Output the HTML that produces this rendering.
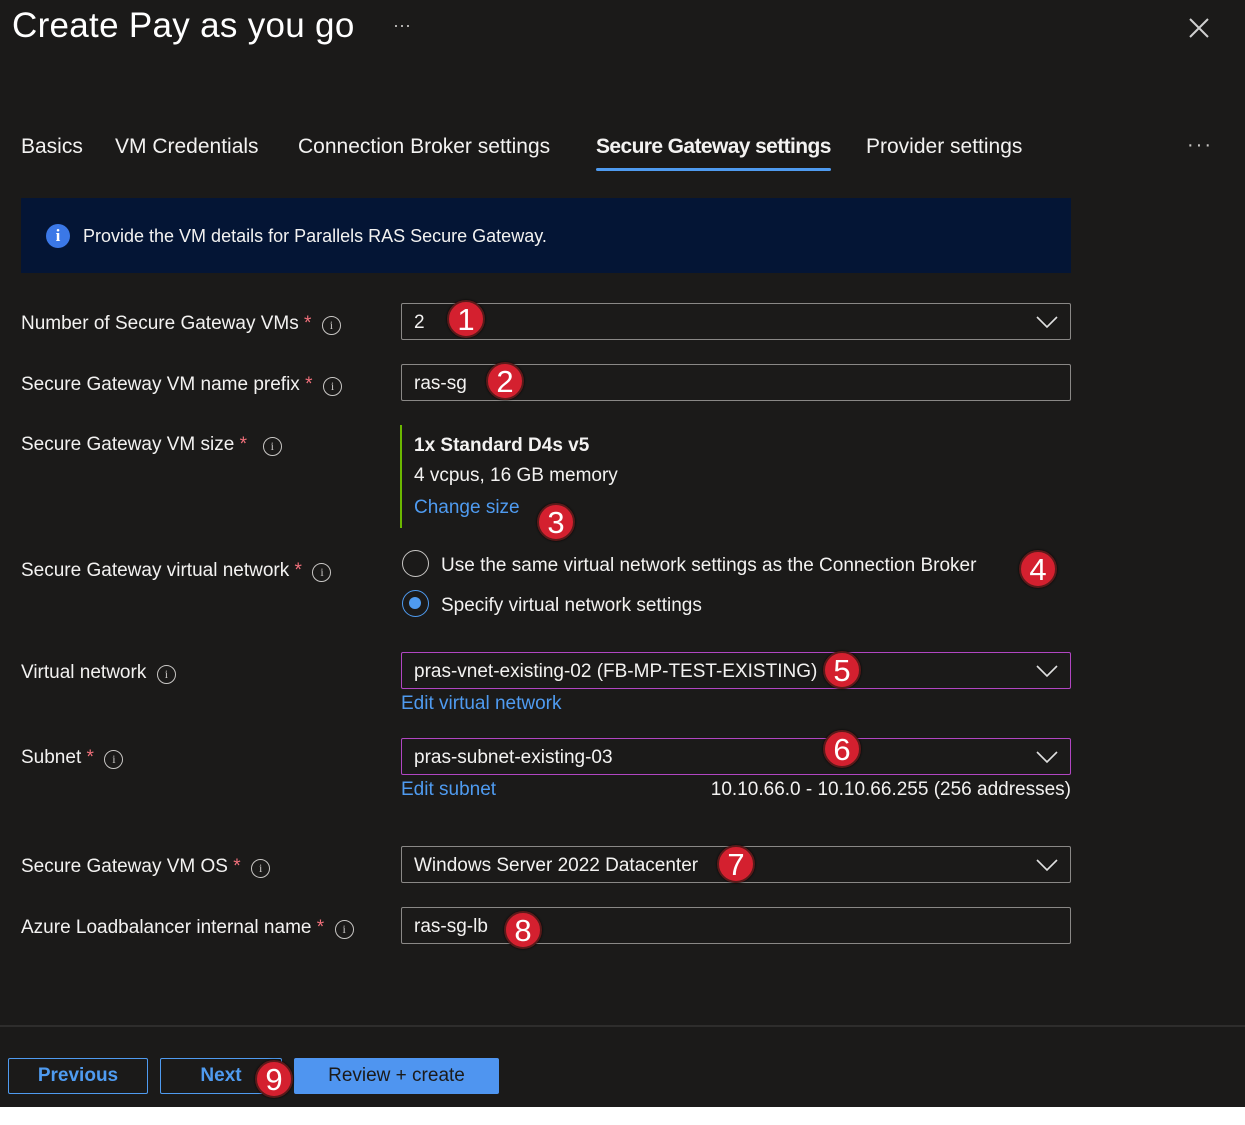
<!DOCTYPE html>
<html><head><meta charset="utf-8"><style>
*{margin:0;padding:0;box-sizing:border-box}
body{width:1245px;height:1125px;background:#fff;font-family:"Liberation Sans",sans-serif;color:#f3f2f1;position:relative;overflow:hidden}
#main{position:absolute;left:0;top:0;width:1245px;height:1107px;background:#1b1a19}
.a{position:absolute;white-space:nowrap}
.lbl{font-size:19px;color:#f3f2f1}
.req{color:#f1707b}
.info{display:inline-block;width:19px;height:19px;border:1.3px solid #c8c6c4;border-radius:50%;font-size:12px;text-align:center;line-height:17px;color:#c8c6c4;font-family:"Liberation Serif",serif;vertical-align:0px}
.box{position:absolute;left:401px;width:670px;height:37px;border:1px solid #8a8886;border-radius:2px;font-size:19px;padding-left:12px;line-height:37px}
.pur{border-color:#b146c2}
.chev{position:absolute;right:12px;top:11px}
.link{color:#4f9bf0;font-size:19px}
.b{position:absolute;width:38px;height:38px;border-radius:50%;background:#d4202f;border:2px solid #5a1a1a;color:#fff;font-size:31px;text-align:center;line-height:35px;box-shadow:0 0 2px #000}
.tab{font-size:21px;color:#f3f2f1;top:135px}
.btn{position:absolute;top:1058px;height:36px;border:1.5px solid #4f9bf0;border-radius:2px;color:#4f9bf0;font-size:19px;font-weight:bold;text-align:center;line-height:33px}
</style></head><body><div id="main">
<div class="a" style="left:12px;top:6px;font-size:35px;color:#fff;letter-spacing:0.3px">Create Pay as you go</div>
<div class="a" style="left:393px;top:15px;font-size:18px;color:#c8c6c4">···</div>
<svg class="a" style="left:1188px;top:17px" width="22" height="22"><path d="M2 2L20 20M20 2L2 20" stroke="#d0d0d0" stroke-width="2"/></svg>
<div class="a tab" style="left:21px">Basics</div>
<div class="a tab" style="left:115px">VM Credentials</div>
<div class="a tab" style="left:298px">Connection Broker settings</div>
<div class="a tab" style="left:596px;font-weight:bold;letter-spacing:-0.6px">Secure Gateway settings</div>
<div class="a" style="left:596px;top:168px;width:235px;height:3px;background:#4f9bf0;border-radius:2px"></div>
<div class="a tab" style="left:866px">Provider settings</div>
<div class="a" style="left:1187px;top:134px;font-size:20px;color:#c8c6c4;letter-spacing:2px">···</div>
<div class="a" style="left:21px;top:198px;width:1050px;height:75px;background:#041535"></div>
<div class="a" style="left:46px;top:224px;width:24px;height:24px;border-radius:50%;background:#3b78e7;color:#fff;font-weight:bold;font-size:17px;text-align:center;line-height:24px;font-family:'Liberation Serif',serif">i</div>
<div class="a" style="left:83px;top:226px;font-size:18px">Provide the VM details for Parallels RAS Secure Gateway.</div>

<div class="a lbl" style="left:21px;top:313px">Number of Secure Gateway VMs <span class="req">*</span> &nbsp;<span class="info">i</span></div>
<div class="box" style="top:303px">2<svg class="chev" width="22" height="14"><path d="M1 2L11 12L21 2" stroke="#e0e0e0" stroke-width="1.6" fill="none"/></svg></div>
<div class="a lbl" style="left:21px;top:374px">Secure Gateway VM name prefix <span class="req">*</span> &nbsp;<span class="info">i</span></div>
<div class="box" style="top:364px">ras-sg</div>
<div class="a lbl" style="left:21px;top:434px">Secure Gateway VM size <span class="req">*</span> &nbsp;&nbsp;<span class="info">i</span></div>
<div class="a" style="left:400px;top:425px;width:2px;height:103px;background:#6bb700"></div>
<div class="a" style="left:414px;top:435px;font-size:19px;font-weight:bold">1x Standard D4s v5</div>
<div class="a" style="left:414px;top:465px;font-size:19px">4 vcpus, 16 GB memory</div>
<div class="a link" style="left:414px;top:497px">Change size</div>
<div class="a lbl" style="left:21px;top:560px">Secure Gateway virtual network <span class="req">*</span> &nbsp;<span class="info">i</span></div>
<div class="a" style="left:402px;top:550px;width:27px;height:27px;border:1.5px solid #c8c6c4;border-radius:50%"></div>
<div class="a lbl" style="left:441px;top:555px">Use the same virtual network settings as the Connection Broker</div>
<div class="a" style="left:402px;top:590px;width:27px;height:27px;border:1.5px solid #4f9bf0;border-radius:50%"><div style="margin:6px;width:12px;height:12px;border-radius:50%;background:#4f9bf0"></div></div>
<div class="a lbl" style="left:441px;top:595px">Specify virtual network settings</div>
<div class="a lbl" style="left:21px;top:662px">Virtual network &nbsp;<span class="info">i</span></div>
<div class="box pur" style="top:652px">pras-vnet-existing-02 (FB-MP-TEST-EXISTING)<svg class="chev" width="22" height="14"><path d="M1 2L11 12L21 2" stroke="#e0e0e0" stroke-width="1.6" fill="none"/></svg></div>
<div class="a link" style="left:401px;top:693px">Edit virtual network</div>
<div class="a lbl" style="left:21px;top:747px">Subnet <span class="req">*</span> &nbsp;<span class="info">i</span></div>
<div class="box pur" style="top:738px">pras-subnet-existing-03<svg class="chev" width="22" height="14"><path d="M1 2L11 12L21 2" stroke="#e0e0e0" stroke-width="1.6" fill="none"/></svg></div>
<div class="a link" style="left:401px;top:779px">Edit subnet</div>
<div class="a lbl" style="right:174px;top:779px">10.10.66.0 - 10.10.66.255 (256 addresses)</div>
<div class="a lbl" style="left:21px;top:856px">Secure Gateway VM OS <span class="req">*</span> &nbsp;<span class="info">i</span></div>
<div class="box" style="top:846px">Windows Server 2022 Datacenter<svg class="chev" width="22" height="14"><path d="M1 2L11 12L21 2" stroke="#e0e0e0" stroke-width="1.6" fill="none"/></svg></div>
<div class="a lbl" style="left:21px;top:917px">Azure Loadbalancer internal name <span class="req">*</span> &nbsp;<span class="info">i</span></div>
<div class="box" style="top:907px">ras-sg-lb</div>
<div class="a" style="left:0;top:1025px;width:1245px;height:2px;background:#2e2d2c"></div>
<div class="btn" style="left:8px;width:140px">Previous</div>
<div class="btn" style="left:160px;width:122px">Next</div>
<div class="btn" style="left:294px;width:205px;background:#4f95f0;color:#1b1a19;border-color:#4f95f0;font-weight:normal">Review + create</div>
<div class="b" style="left:447px;top:300px">1</div>
<div class="b" style="left:486px;top:362px">2</div>
<div class="b" style="left:537px;top:503px">3</div>
<div class="b" style="left:1019px;top:550px">4</div>
<div class="b" style="left:823px;top:651px">5</div>
<div class="b" style="left:823px;top:730px">6</div>
<div class="b" style="left:717px;top:845px">7</div>
<div class="b" style="left:504px;top:911px">8</div>
<div class="b" style="left:255px;top:1060px">9</div>
</div></body></html>
